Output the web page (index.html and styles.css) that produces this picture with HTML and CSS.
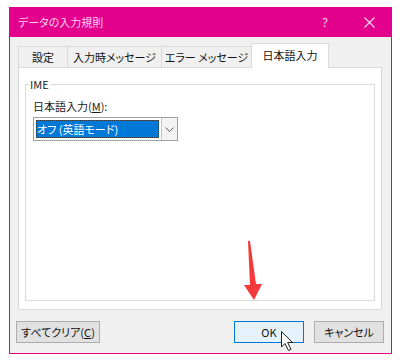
FILE: index.html
```html
<!DOCTYPE html>
<html lang="ja">

<head>
  <meta charset="UTF-8">
  <meta name="viewport" content="width=device-width, initial-scale=1.0">
  <title>データの入力規則</title>

  <link rel="stylesheet" href="styles.css">
</head>

<body>
  <div class="dialog">
    <div class="titlebar">
      <span class="title">データの入力規則</span>
      <span class="title-btn help">?</span>
      <span class="title-btn close">
        <svg width="11" height="11" viewBox="0 0 11 11">
          <path d="M0.5 0.5 L10.5 10.5 M10.5 0.5 L0.5 10.5" stroke="#fbd3ea" stroke-width="1.2" fill="none" />
        </svg>
      </span>
    </div>

    <div class="body">
      <div class="tabs">
        <div class="tab tab-settings">設定</div>
        <div class="tab tab-input">入力時メッセージ</div>
        <div class="tab tab-error">エラー メッセージ</div>
        <div class="tab tab-ime active">日本語入力</div>
      </div>

      <div class="panel">
        <fieldset class="group">
          <legend>IME</legend>
          <div class="field-label">日本語入力(<u>M</u>):</div>
          <div class="combo">
            <div class="combo-value"><span class="selected">オフ (英語モード)</span></div>
            <div class="combo-btn">
              <svg width="9" height="5" viewBox="0 0 9 5">
                <path d="M0.5 0.5 L4.5 4.5 L8.5 0.5" stroke="#555" stroke-width="1" fill="none" />
              </svg>
            </div>
          </div>
        </fieldset>
      </div>

      <div class="actions">
        <button type="button" class="btn btn-clear">すべてクリア(<u>C</u>)</button>
        <span class="spacer"></span>
        <button type="button" class="btn btn-ok">OK</button>
        <button type="button" class="btn btn-cancel">キャンセル</button>
      </div>
    </div>
  </div>

  <svg class="overlay" width="400" height="360" viewBox="0 0 400 360">
    <!-- red arrow -->
    <polygon points="248,241 250,241 256,284 262,284 254,300 244,285 250,285" fill="#f43a3a" />
    <!-- mouse pointer -->
    <path d="M281.5 331.5 L281.5 347 L285 343.5 L288.5 350.5 L291 349.3 L287.6 342.5 L292.5 342.5 Z"
      fill="#fff" stroke="#222" stroke-width="1" stroke-linejoin="round" />
  </svg>
</body>

</html>
```

FILE: styles.css
```css
* {
  box-sizing: border-box;
}

body {
  margin: 0;
  background: #fff;
  font-family: "Noto Sans CJK JP", "Noto Sans", sans-serif;
  font-size: 11px;
  font-feature-settings: "palt";
  color: #1a1a1a;
  position: relative;
}

.dialog {
  margin: 7px 0 0 9px;
  width: 383px;
  height: 347px;
  border: 1px solid #e3008c;
  background: #f0f0f0;
  display: flex;
  flex-direction: column;
}

.titlebar {
  height: 30px;
  background: #e3008c;
  color: #fbd3ea;
  display: flex;
  align-items: center;
  padding-left: 8px;
  margin-top: -1px;
}

.title {
  flex: 1;
  font-size: 11px;
}

.title-btn {
  width: 44px;
  display: flex;
  justify-content: center;
  align-items: center;
}

.help {
  font-family: "Noto Sans", sans-serif;
  font-size: 12px;
}

.body {
  flex: 1;
  display: flex;
  flex-direction: column;
  padding: 6px 8px 8px 8px;
}

.tabs {
  display: flex;
  align-items: flex-end;
  height: 24px;
  position: relative;
  z-index: 1;
}

.tab {
  height: 21px;
  border: 1px solid #d9d9d9;
  border-bottom: none;
  margin-right: -1px;
  display: flex;
  align-items: center;
  justify-content: center;
  background: #f0f0f0;
  color: #111;
}

.tab-settings {
  width: 50px;
}

.tab-input {
  width: 95px;
}

.tab-error {
  width: 91px;
}

.tab-ime {
  width: 78px;
}

.tab.active {
  height: 25px;
  margin-bottom: -1px;
  background: #fff;
  padding-bottom: 2px;
}

.panel {
  height: 243px;
  background: #fff;
  border: 1px solid #d9d9d9;
  margin-right: 1px;
  display: flex;
  flex-direction: column;
  padding: 9px 6px 8px 6px;
}

.group {
  flex: 1;
  margin: 0;
  border: 1px solid #dcdcdc;
  padding: 0 0 0 7px;
  min-width: 0;
}

.group legend {
  padding: 0 1px;
  margin-left: -4px;
  line-height: 14px;
  color: #222;
}

.field-label {
  margin-top: 8px;
  line-height: 14px;
}

.combo {
  margin-top: 4px;
  width: 145px;
  height: 24px;
  border: 1px solid #a0a0a0;
  display: flex;
  background: #fff;
}

.combo-value {
  flex: 1;
  padding: 2px;
  display: flex;
}

.selected {
  flex: 1;
  background: #0078d7;
  color: #fff;
  line-height: 18px;
  padding-left: 1px;
  outline: 1px dotted #333;
  outline-offset: -1px;
}

.combo-btn {
  width: 16px;
  border-left: 1px solid #c8c8c8;
  background: #f3f3f3;
  display: flex;
  align-items: center;
  justify-content: center;
}

.actions {
  display: flex;
  align-items: center;
  margin-top: 11px;
  height: 22px;
  padding-right: 0;
}

.btn {
  font-family: inherit;
  font-size: 11px;
  font-feature-settings: "palt";
  height: 22px;
  border: 1px solid #adadad;
  background: #e1e1e1;
  color: #111;
  padding: 0;
  border-radius: 0;
}

.btn-clear {
  width: 84px;
  margin-left: -2px;
}

.spacer {
  flex: 1;
}

.btn-ok {
  width: 70px;
  background: #e5f1fb;
  border-color: #0078d7;
  margin-right: 10px;
}

.btn-cancel {
  width: 70px;
  margin-right: -1px;
}

.overlay {
  position: absolute;
  left: 0;
  top: 0;
  pointer-events: none;
}
```
